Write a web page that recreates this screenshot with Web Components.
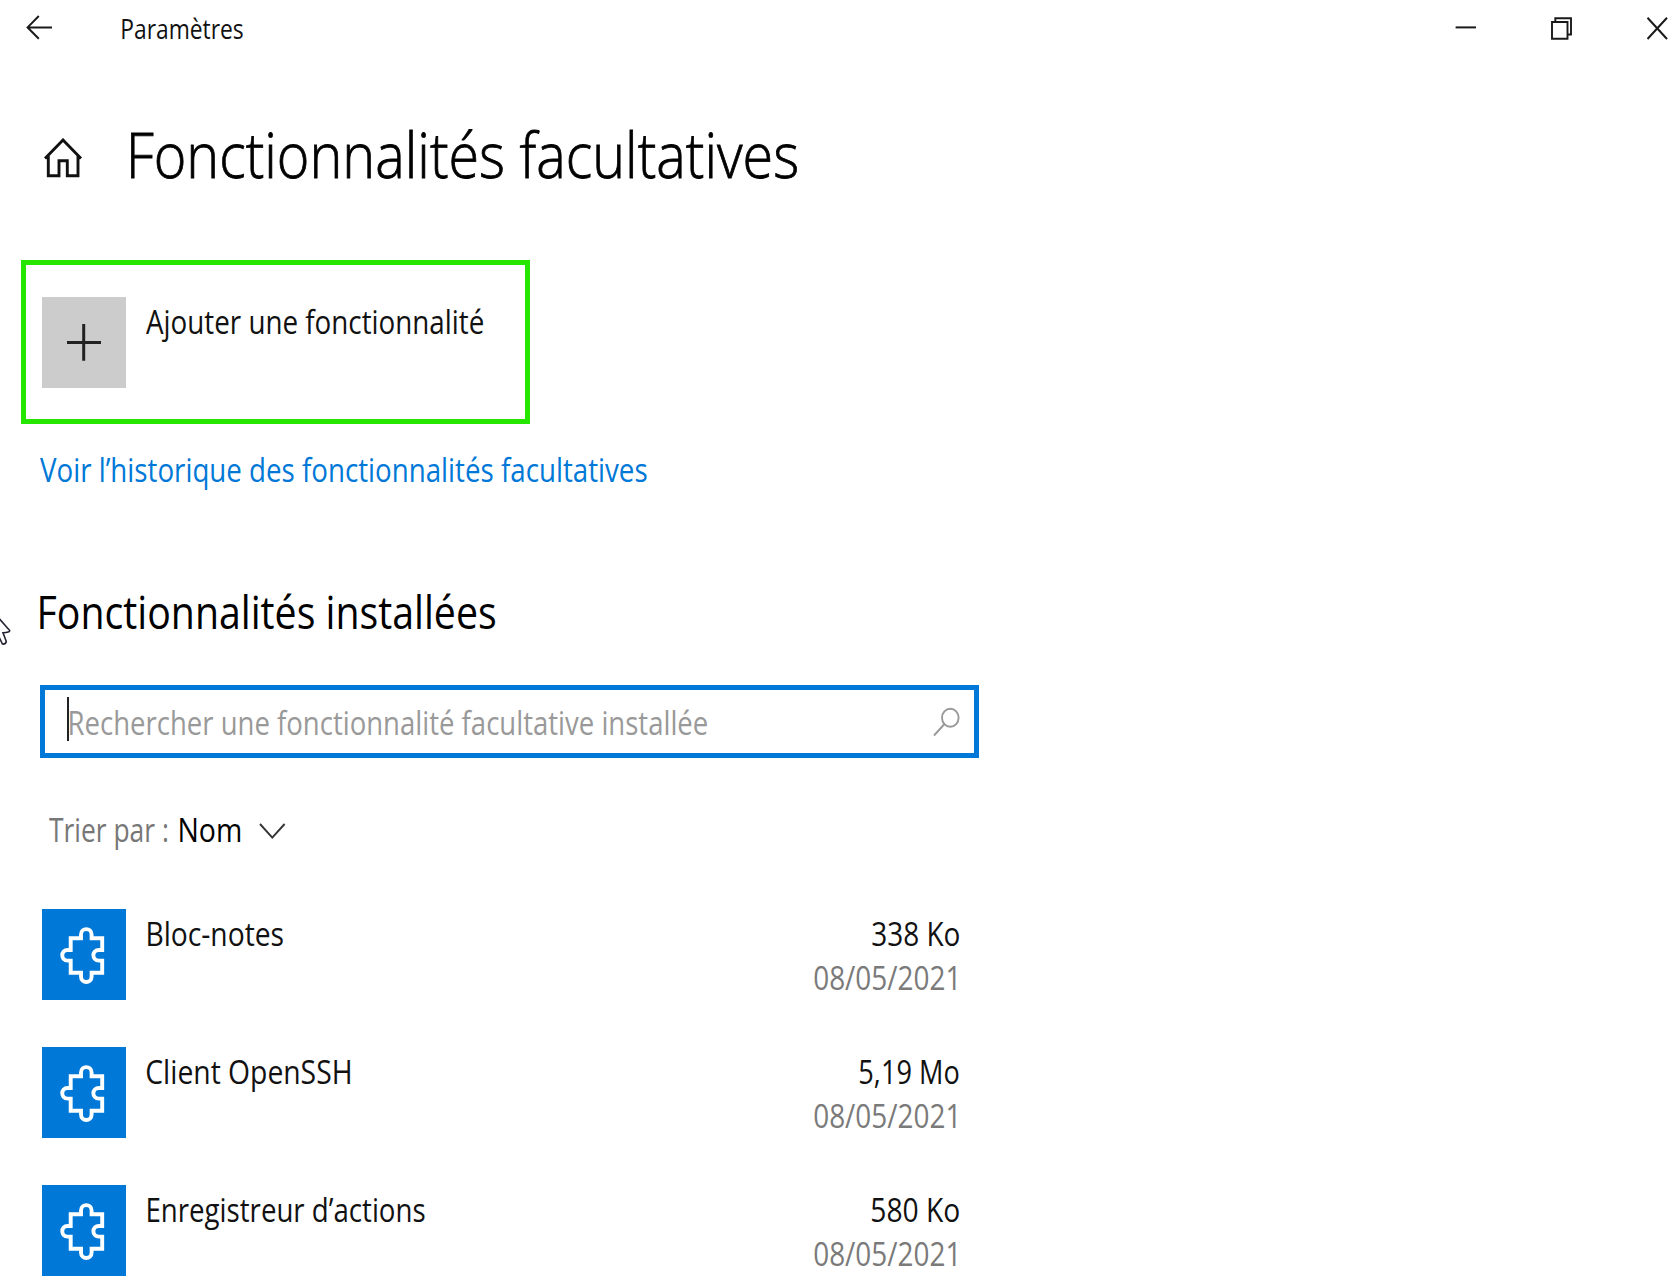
<!DOCTYPE html>
<html lang="fr">
<head>
<meta charset="utf-8">
<title>Paramètres</title>
<style>
html,body{margin:0;padding:0;background:#fff;overflow:hidden}
body{font-family:"Open Sans","Noto Sans",sans-serif;color:#000}
</style>
</head>
<body>
<settings-page></settings-page>
<script>
const FAMILY = '"Open Sans","Noto Sans",sans-serif';
const ctx = document.createElement('canvas').getContext('2d');

// One line of condensed text whose ink fills exactly `w` pixels.
class FitText extends HTMLElement {
  connectedCallback() {
    // A forwarded slot carries no text of its own: take the host's.
    if (this.querySelector('slot')) this.textContent = this.getRootNode().host.textContent;
    const w = +this.getAttribute('w'), fs = +this.getAttribute('size');
    const weight = this.getAttribute('weight') || 400;
    const text = this.textContent.trim();
    ctx.font = `${weight} ${fs}px ${FAMILY}`;
    const m = ctx.measureText(text);
    const s = w / (m.actualBoundingBoxLeft + m.actualBoundingBoxRight);
    this.attachShadow({mode: 'open'}).innerHTML = `<style>
      :host{display:block;flex:none;width:${w}px;height:${fs}px;font:${weight} ${fs}px/${fs}px ${FAMILY}}
      span{display:block;width:max-content;white-space:pre;transform-origin:0 0;
        transform:translateX(${m.actualBoundingBoxLeft * s}px) scaleX(${s})}
    </style><span><slot></slot></span>`;
  }
}

class TitleBar extends HTMLElement {
  connectedCallback() {
    this.attachShadow({mode: 'open'}).innerHTML = `<style>
      :host{display:flex;height:56px;align-items:flex-start;box-sizing:border-box;padding:15px 9px 0 26px;color:#111}
      svg{display:block;flex:none;fill:none;stroke:#1a1a1a;stroke-width:2}
      .name{margin:0 0 0 69px}
      .controls{display:flex;margin-left:auto;gap:75px;margin-top:2px}
    </style>
    <svg width="27" height="25" viewBox="0 0 27 25"><path d="M26 12.4H1.6M12.8 1L1.6 12.4L12.8 23.8"/></svg>
    <fit-text class="name" w="121" size="27">Paramètres</fit-text>
    <div class="controls">
      <svg width="21" height="23" viewBox="0 0 21 23"><path d="M0.6 10.4H21"/></svg>
      <svg width="21" height="23" viewBox="0 0 21 23"><path d="M1 5H16.5V21.7H1ZM4.3 5V1.3H20V17.5H16.5" stroke-width="1.9"/></svg>
      <svg width="21" height="23" viewBox="0 0 21 23"><path d="M.5 .8L20 22M20 .8L.5 22"/></svg>
    </div>`;
  }
}

class PageHeading extends HTMLElement {
  connectedCallback() {
    this.attachShadow({mode: 'open'}).innerHTML = `<style>
      :host{display:flex;align-items:flex-start;padding-left:43.7px;gap:48.3px;height:138px}
      svg{margin-top:16px;flex:none;fill:none;stroke:#111;stroke-width:2.9}
      fit-text{-webkit-text-stroke:.8px #000}
    </style>
    <svg width="39" height="40" viewBox="0 0 39 40"><path d="M1 20.5L19 2L37 20.5M4.3 18V37.7H15V22.7H23.3V37.7H34V18"/></svg>
    <fit-text w="666" size="63" weight="300"><slot></slot></fit-text>`;
  }
}

class AddFeature extends HTMLElement {
  connectedCallback() {
    this.attachShadow({mode: 'open'}).innerHTML = `<style>
      :host{display:flex;align-items:flex-start;box-sizing:border-box;width:509px;height:164px;margin-left:21px;
        border:5px solid #26e600;padding:32.5px 0 0 16px;gap:20px}
      .tile{width:84px;height:91px;background:#ccc;flex:none}
      svg{display:block}
      fit-text{margin-top:8px;color:#111}
    </style>
    <div class="tile"><svg width="84" height="91"><path d="M25 45.5H59M41.7 27V63.7" stroke="#222" stroke-width="3"/></svg></div>
    <fit-text w="337" size="33">Ajouter une fonctionnalité</fit-text>`;
  }
}

class SearchField extends HTMLElement {
  connectedCallback() {
    this.attachShadow({mode: 'open'}).innerHTML = `<style>
      :host{display:flex;align-items:flex-start;box-sizing:border-box;width:938.5px;height:73px;margin-left:40.3px;
        border:5px solid #0078d7;color:#999;padding-left:21.7px}
      i{display:block;width:1.7px;height:44px;background:#222;margin-top:7.7px;flex:none}
      fit-text{margin:16px 0 0 1px}
      svg{margin:17.5px 13.5px 0 auto;fill:none;stroke:#999;stroke-width:1.9}
    </style>
    <i></i><fit-text w="637" size="33">Rechercher une fonctionnalité facultative installée</fit-text>
    <svg width="27" height="30" viewBox="0 0 27 30"><ellipse cx="17.3" cy="10.7" rx="8.3" ry="9"/><path d="M11.5 17L1 28.5"/></svg>`;
  }
}

class SortBar extends HTMLElement {
  connectedCallback() {
    this.attachShadow({mode: 'open'}).innerHTML = `<style>
      :host{display:flex;align-items:flex-start;padding-left:49.3px;color:#777}
      .v{color:#000;margin-left:11.8px}
      svg{margin:10px 0 0 19.5px;fill:none;stroke:#333;stroke-width:1.9}
    </style>
    <fit-text w="118.5" size="33">Trier par :</fit-text><fit-text class="v" w="60" size="33">Nom</fit-text>
    <svg width="27" height="17" viewBox="0 0 27 17"><path d="M1 1L13.3 14.6L25.6 1"/></svg>`;
  }
}

class FeatureItem extends HTMLElement {
  connectedCallback() {
    const a = n => this.getAttribute(n);
    this.attachShadow({mode: 'open'}).innerHTML = `<style>
      :host{display:flex;align-items:flex-start;box-sizing:border-box;width:959.3px;height:138.1px;padding-left:42px;color:#111}
      .tile{display:block;width:84px;height:91px;background:#0078d7;flex:none;fill:none;stroke:#fff;stroke-width:3.9}
      .name{margin:8px 0 0 ${a('indent')}px}
      .meta{display:flex;flex-direction:column;align-items:flex-end;margin:8px 0 0 auto;gap:11px}
      .date{color:#7a7a7a;margin-right:3.2px}
    </style>
    <svg class="tile" viewBox="0 0 84 91"><path d="M28.7 29.2H39V25.5C39 18.3 49.6 18.3 49.6 25.5V29.2H60.2V41H57C49.5 41 49.5 51.6 57 51.6H60.2V63.7H49.6V67.5C49.6 74.8 39 74.8 39 67.5V63.7H28.7V51.6H25.6C18.5 51.6 18.5 41 25.6 41H28.7Z"/></svg>
    <fit-text class="name" w="${a('name-w')}" size="33"><slot></slot></fit-text>
    <div class="meta">
      <fit-text w="${a('size-w')}" size="33">${a('size')}</fit-text>
      <fit-text class="date" w="141.7" size="33">${a('date')}</fit-text>
    </div>`;
  }
}

class SettingsPage extends HTMLElement {
  connectedCallback() {
    this.attachShadow({mode: 'open'}).innerHTML = `<style>
      :host{display:flex;flex-direction:column;position:relative;width:1677px;height:1286px;overflow:hidden;background:#fff}
      :host>*{flex:none}
      page-heading{margin-top:65.5px}
      .link{color:#0078d7;margin:29px 0 0 40px}
      .sub{margin:102.5px 0 0 40px}
      search-field{margin-top:50.5px}
      sort-bar{margin-top:55.5px}
      .list{display:flex;flex-direction:column;margin-top:62.7px}
      .pointer{position:absolute;left:0;top:605px;fill:#fff;stroke:#223;stroke-width:1.6}
    </style>
    <title-bar></title-bar>
    <page-heading>Fonctionnalités facultatives</page-heading>
    <add-feature></add-feature>
    <fit-text class="link" w="607" size="33">Voir l’historique des fonctionnalités facultatives</fit-text>
    <fit-text class="sub" w="455" size="46">Fonctionnalités installées</fit-text>
    <search-field></search-field>
    <sort-bar></sort-bar>
    <div class="list">
      <feature-item name-w="135.4" indent="22.3" size="338 Ko" size-w="87.6" date="08/05/2021">Bloc-notes</feature-item>
      <feature-item name-w="203.5" indent="20.9" size="5,19 Mo" size-w="99" date="08/05/2021">Client OpenSSH</feature-item>
      <feature-item name-w="277" indent="22.3" size="580 Ko" size-w="87.6" date="08/05/2021">Enregistreur d’actions</feature-item>
    </div>
    <svg class="pointer" width="14" height="44" viewBox="0 0 14 44"><path d="M-4 10L9.7 25.5Q10 27.3 3 27.8L6.3 36.5Q5.5 39.5 2.5 39L-1 32"/></svg>`;
  }
}

customElements.define('settings-page', SettingsPage);
customElements.define('title-bar', TitleBar);
customElements.define('page-heading', PageHeading);
customElements.define('add-feature', AddFeature);
customElements.define('search-field', SearchField);
customElements.define('sort-bar', SortBar);
customElements.define('feature-item', FeatureItem);
customElements.define('fit-text', FitText);
</script>
</body>
</html>
